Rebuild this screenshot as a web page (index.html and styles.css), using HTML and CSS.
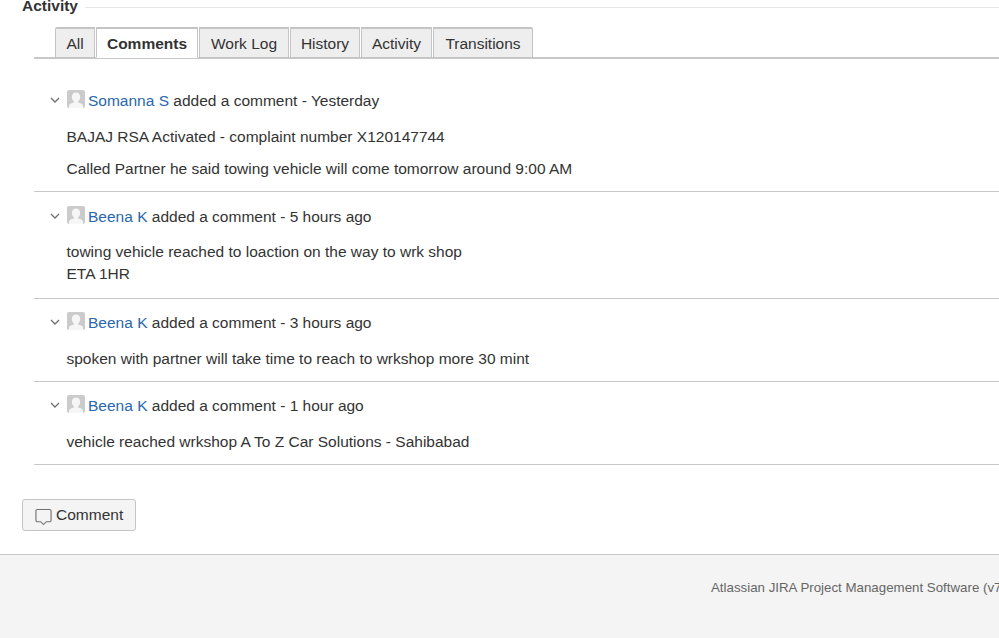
FILE: index.html
```html
<!DOCTYPE html>
<html lang="en">
<head>
<meta charset="utf-8">
<title>Activity</title>
<link rel="stylesheet" href="styles.css">
</head>
<body>
<main class="page">
  <header class="module-head">
    <h2 class="module-title">Activity</h2>
    <div class="module-rule"></div>
  </header>
  <nav class="tabs">
    <a class="tab tab-all">All</a>
    <a class="tab tab-active tab-comments">Comments</a>
    <a class="tab tab-worklog">Work Log</a>
    <a class="tab tab-history">History</a>
    <a class="tab tab-activity">Activity</a>
    <a class="tab tab-transitions">Transitions</a>
  </nav>
  <section class="comments">
    <article class="comment c1">
      <div class="comment-head">
        <svg class="chev" viewBox="0 0 10 6"><path d="M1 1l4 4 4-4" fill="none" stroke="#707070" stroke-width="1.3"/></svg>
        <svg class="avatar" viewBox="0 0 18 18"><rect width="18" height="18" rx="2" fill="#cbcbcb"/><path d="M9 2.500c2.700 0 4.200 2 4.200 4.500 0 1.900-.9 3.400-2 4.300v1.200c2.200.7 4.800 1.500 4.800 3.200V18H2v-2.300c0-1.700 2.600-2.500 4.800-3.200v-1.200C5.700 10.400 4.800 8.900 4.800 7c0-2.500 1.500-4.500 4.200-4.500z" fill="#f6f6f6"/></svg>
        <span class="meta"><a class="user">Somanna S</a> added a comment - Yesterday</span>
      </div>
      <div class="body">
        <p>BAJAJ RSA Activated - complaint number X120147744</p>
        <p>Called Partner he said towing vehicle will come tomorrow around 9:00 AM</p>
      </div>
    </article>
    <article class="comment c2">
      <div class="comment-head">
        <svg class="chev" viewBox="0 0 10 6"><path d="M1 1l4 4 4-4" fill="none" stroke="#707070" stroke-width="1.3"/></svg>
        <svg class="avatar" viewBox="0 0 18 18"><rect width="18" height="18" rx="2" fill="#cbcbcb"/><path d="M9 2.500c2.700 0 4.200 2 4.200 4.500 0 1.900-.9 3.400-2 4.300v1.200c2.200.7 4.800 1.500 4.800 3.200V18H2v-2.300c0-1.700 2.600-2.500 4.800-3.200v-1.200C5.700 10.400 4.800 8.900 4.800 7c0-2.500 1.500-4.500 4.200-4.500z" fill="#f6f6f6"/></svg>
        <span class="meta"><a class="user">Beena K</a> added a comment - 5 hours ago</span>
      </div>
      <div class="body">
        <p>towing vehicle reached to loaction on the way to wrk shop<br>ETA 1HR</p>
      </div>
    </article>
    <article class="comment c3">
      <div class="comment-head">
        <svg class="chev" viewBox="0 0 10 6"><path d="M1 1l4 4 4-4" fill="none" stroke="#707070" stroke-width="1.3"/></svg>
        <svg class="avatar" viewBox="0 0 18 18"><rect width="18" height="18" rx="2" fill="#cbcbcb"/><path d="M9 2.500c2.700 0 4.200 2 4.200 4.500 0 1.900-.9 3.400-2 4.300v1.200c2.200.7 4.800 1.500 4.800 3.200V18H2v-2.300c0-1.700 2.600-2.500 4.800-3.200v-1.200C5.700 10.400 4.800 8.900 4.800 7c0-2.500 1.500-4.500 4.200-4.500z" fill="#f6f6f6"/></svg>
        <span class="meta"><a class="user">Beena K</a> added a comment - 3 hours ago</span>
      </div>
      <div class="body">
        <p>spoken with partner will take time to reach to wrkshop more 30 mint</p>
      </div>
    </article>
    <article class="comment c4">
      <div class="comment-head">
        <svg class="chev" viewBox="0 0 10 6"><path d="M1 1l4 4 4-4" fill="none" stroke="#707070" stroke-width="1.3"/></svg>
        <svg class="avatar" viewBox="0 0 18 18"><rect width="18" height="18" rx="2" fill="#cbcbcb"/><path d="M9 2.500c2.700 0 4.200 2 4.200 4.500 0 1.900-.9 3.400-2 4.300v1.200c2.200.7 4.800 1.500 4.800 3.200V18H2v-2.300c0-1.700 2.600-2.500 4.800-3.200v-1.200C5.700 10.400 4.800 8.900 4.800 7c0-2.500 1.500-4.500 4.200-4.500z" fill="#f6f6f6"/></svg>
        <span class="meta"><a class="user">Beena K</a> added a comment - 1 hour ago</span>
      </div>
      <div class="body">
        <p>vehicle reached wrkshop A To Z Car Solutions - Sahibabad</p>
      </div>
    </article>
  </section>
  <button class="comment-btn" type="button">
    <svg class="bubble" viewBox="0 0 18 18"><path d="M2.500 1h13A1.500 1.500 0 0 1 17 2.500v10a1.500 1.500 0 0 1-1.500 1.500H12l-3 3-3-3H2.500A1.500 1.500 0 0 1 1 12.500v-10A1.500 1.500 0 0 1 2.500 1z" fill="none" stroke="#707070" stroke-width="1.200"/></svg>
    Comment
  </button>
</main>
<footer class="footer">
  <p class="footer-text">Atlassian JIRA Project Management Software (v7.3.6)</p>
</footer>
</body>
</html>
```

FILE: styles.css
```css
html, body {
  margin: 0;
  padding: 0;
  height: 638px;
  overflow: hidden;
  background: #fff;
  font-family: "Liberation Sans", Arial, sans-serif;
  color: #333;
}

.page {
  height: 554px;
  box-sizing: border-box;
  overflow: hidden;
}

.module-head {
  display: flex;
  align-items: center;
  margin: -4px 0 0 22px;
  height: 20px;
}

.module-title {
  margin: 0;
  font-size: 15.5px;
  line-height: 20px;
  font-weight: 700;
  color: #333;
}

.module-rule {
  flex: 1;
  height: 1px;
  margin: 3px 0 0 7px;
  background: #e6e6e6;
}

.tabs {
  display: flex;
  align-items: flex-end;
  margin: 11px 0 0 34px;
  padding-left: 21px;
  height: 32px;
  box-sizing: border-box;
  border-bottom: 2px solid #c8c8c8;
}

.tab {
  box-sizing: border-box;
  height: 31px;
  margin-bottom: -1px;
  padding-top: 1px;
  display: flex;
  align-items: center;
  justify-content: center;
  font-size: 15.5px;
  color: #333;
  background: #eeeeee;
  border: 1px solid #c4c4c4;
  border-top-width: 2px;
  border-bottom: 1px solid #c4c4c4;
  margin-right: 1px;
}

.tab-all { width: 40px; border-radius: 2px 0 0 0; }
.tab-comments { width: 102px; }
.tab-worklog { width: 90px; }
.tab-history { width: 70px; }
.tab-activity { width: 71px; }
.tab-transitions { width: 100px; margin-right: 0; border-radius: 0 2px 0 0; }

.tab-active {
  background: #fff;
  border-bottom-color: #fff;
  font-weight: 700;
}

.comments {
  margin-left: 34px;
}

.comment {
  box-sizing: border-box;
  border-bottom: 1px solid #c8c8c8;
  padding-left: 14px;
}

.c1 { height: 133px; padding-top: 32px; }
.c2 { height: 107px; padding-top: 15px; }
.c3 { height: 83px; padding-top: 14px; }
.c4 { height: 83px; padding-top: 14px; }

.comment-head {
  display: flex;
  align-items: center;
  height: 20px;
}

.chev {
  width: 10px;
  height: 6px;
  margin: -3px 7px 0 2px;
  flex: none;
}

.avatar {
  width: 18px;
  height: 18px;
  margin: -4px 3px 0 0;
  flex: none;
}

.meta {
  font-size: 15.5px;
  line-height: 20px;
  white-space: nowrap;
}

.user {
  color: #2a67ad;
}

.body {
  margin: 15px 0 0 18.5px;
  font-size: 15.5px;
  line-height: 22px;
}

.c2 .body { margin-top: 14px; }

.body p {
  margin: 0 0 10px;
}

.comment-btn {
  display: flex;
  align-items: center;
  box-sizing: border-box;
  width: 114px;
  height: 32px;
  margin: 34px 0 0 22px;
  padding: 0 0 0 12px;
  background: #f4f4f4;
  border: 1px solid #c4c4c4;
  border-radius: 3px;
  font-family: inherit;
  font-size: 15.5px;
  color: #333;
}

.bubble {
  width: 17px;
  height: 18px;
  margin: 3px 4px 0 0;
  flex: none;
}

.footer {
  box-sizing: border-box;
  height: 84px;
  background: #f4f4f4;
  border-top: 1px solid #c8c8c8;
  overflow: hidden;
  padding: 24px 0 0 711px;
}

.footer-text {
  margin: 0;
  font-size: 13.3px;
  line-height: 18px;
  color: #666;
  white-space: nowrap;
}
```
